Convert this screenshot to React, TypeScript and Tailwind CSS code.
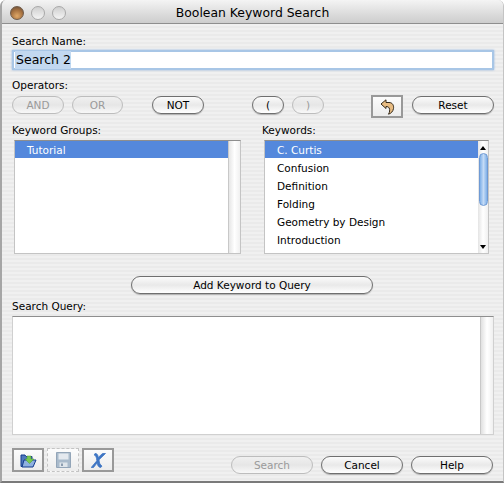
import React from 'react';

const Light = ({ active }: { active?: boolean }) => (
  <div
    className={
      active
        ? 'h-[14px] w-[14px] rounded-full border border-[#6e5a48] bg-[radial-gradient(circle_at_50%_75%,#e0a868,#a5703f_55%,#5f4a3c)]'
        : 'h-[14px] w-[14px] rounded-full border border-[#a8a8a8] bg-[linear-gradient(#cfcfcf,#f4f4f4)]'
    }
  />
);

const AquaButton = ({
  label,
  className,
  disabled,
}: {
  label: string;
  className: string;
  disabled?: boolean;
}) => (
  <div
    className={`flex h-[18px] shrink-0 items-center justify-center rounded-full border pt-[1px] text-[10.5px] ${
      disabled
        ? 'border-[#bdbdbd] bg-[linear-gradient(#f0f0f0,#e6e6e6_50%,#f8f8f8)] text-[#9a9a9a]'
        : 'border-[#6f6f6f] bg-[linear-gradient(#fbfbfb,#e9e9e9_50%,#ffffff)] text-black shadow-[0_1px_1px_rgba(0,0,0,0.25)]'
    } ${className}`}
  >
    {label}
  </div>
);

const IconBox = ({
  children,
  className,
  disabled,
}: {
  children: React.ReactNode;
  className?: string;
  disabled?: boolean;
}) => (
  <div
    className={`flex items-center justify-center bg-[linear-gradient(#fcfcfc,#ececec)] ${
      disabled ? 'border border-dashed border-[#c4c4c4]' : 'border-2 border-[#999999]'
    } ${className ?? ''}`}
  >
    {children}
  </div>
);

const Field = ({ label }: { label: string }) => (
  <div className="h-[14px] text-[10.5px] leading-[14px] text-black">{label}</div>
);

const keywords = ['Confusion', 'Definition', 'Folding', 'Geometry by Design', 'Introduction'];

export default function App() {
  return (
    <div
      className="flex h-[483px] w-[504px] flex-col overflow-hidden rounded-t-[6px] border-b-2 border-l-2 border-r border-b-[#7a7a7a] border-l-[#a6a6a6] border-r-[#c4c4c4] bg-[repeating-linear-gradient(#f0f0f0_0px,#f0f0f0_2px,#eaeaea_2px,#eaeaea_4px)] text-black"
      style={{ fontFamily: '"DejaVu Sans", sans-serif' }}
    >
      {/* Title bar */}
      <div className="relative flex h-[24px] shrink-0 items-center justify-center border-b border-[#8e8e8e] bg-[linear-gradient(#f4f4f4,#dcdcdc_60%,#cdcdcd)] pt-[3px] text-[12.4px]">
        <div className="absolute left-[8px] top-[6px] flex gap-[7px]">
          <Light active />
          <Light />
          <Light />
        </div>
        Boolean Keyword Search
      </div>

      <div className="flex flex-1 flex-col pl-[10px] pr-[9px] pt-[10px]">
        <Field label="Search Name:" />
        <div className="mt-[2px] flex h-[20px] items-center border-2 border-[#a8c6e6] bg-white pl-[1px] text-[12.500px] shadow-[0_0_2px_#8fb2dd]">
          <span className="bg-[#c2d8f0] pl-[1px]">Search 2</span>
        </div>

        <div className="mt-[8px]">
          <Field label="Operators:" />
        </div>
        <div className="mt-[3px] flex h-[23px] items-start">
          <AquaButton label="AND" disabled className="mt-[1px] w-[52px]" />
          <AquaButton label="OR" disabled className="ml-[8px] mt-[1px] w-[51px]" />
          <AquaButton label="NOT" className="ml-[29px] mt-[1px] w-[52px]" />
          <AquaButton label="(" className="ml-[48px] mt-[1px] w-[32px]" />
          <AquaButton label=")" disabled className="ml-[8px] mt-[1px] w-[32px]" />
          <IconBox className="ml-[47px] h-[23px] w-[32px]">
            <svg width="15" height="16" viewBox="0 0 15 16">
              <path
                d="M1 5 L6 .8 V3.500 H9 C12.500 3.500 14 6.500 13.500 9.500 C13 12.500 11 14.500 8.500 15.200 C9.800 13 10 11 9.200 9 C8.700 8 7.500 7.500 6 7.500 V9.500 Z"
                fill="#e8bc82"
                stroke="#33281a"
                strokeWidth="1"
                strokeLinejoin="round"
              />
            </svg>
          </IconBox>
          <AquaButton label="Reset" className="ml-[9px] mt-[1px] w-[82px]" />
        </div>

        {/* Keyword lists */}
        <div className="mt-[5px] flex">
          <div className="w-[228px]">
            <Field label="Keyword Groups:" />
            <div className="ml-[2px] mt-[3px] flex h-[114px] w-[227px] border border-[#c4c4c4] border-t-[#8e8e8e] bg-white">
              <div className="flex-1">
                <div className="flex h-[17px] items-center bg-[#5488dc] pl-[12px] pt-[2px] text-[10.5px] text-white">Tutorial</div>
              </div>
              <div className="w-[12px] border-l border-[#c8c8c8] bg-[linear-gradient(90deg,#e6e6e6,#ffffff_50%,#f0f0f0)]" />
            </div>
          </div>
          <div className="ml-[22px] w-[228px]">
            <Field label="Keywords:" />
            <div className="ml-[2px] mt-[3px] flex h-[114px] w-[225px] border border-[#c4c4c4] border-t-[#8e8e8e] bg-white">
              <div className="flex-1">
                <div className="flex h-[17px] items-center bg-[#5488dc] pl-[12px] pt-[2px] text-[10.5px] text-white">C. Curtis</div>
                <div className="pt-[2px]">
                  {keywords.map((k) => (
                    <div key={k} className="flex h-[18px] items-center pl-[12px] text-[10.5px]">
                      {k}
                    </div>
                  ))}
                </div>
              </div>
              <div className="flex w-[10px] flex-col items-center bg-[linear-gradient(90deg,#e4e4e4,#ffffff_50%,#f0f0f0)]">
                <div className="mt-[5px] h-0 w-0 border-x-[3px] border-b-[4px] border-x-transparent border-b-black" />
                <div className="mt-[3px] h-[53px] w-[9px] rounded-full border border-[#6f9ad4] bg-[linear-gradient(90deg,#7fb0e8,#c4dbf6_50%,#7fb0e8)]" />
                <div className="mb-[4px] mt-auto h-0 w-0 border-x-[3px] border-t-[4px] border-x-transparent border-t-black" />
              </div>
            </div>
          </div>
        </div>

        <div className="mt-[22px] flex justify-center pr-[2px]">
          <AquaButton label="Add Keyword to Query" className="w-[242px]" />
        </div>

        <div className="mt-[5px]">
          <Field label="Search Query:" />
        </div>
        <div className="mt-[3px] flex h-[119px] border border-[#d0d0d0] border-t-[#8e8e8e] bg-white">
          <div className="flex-1" />
          <div className="w-[13px] border-l border-[#c8c8c8] bg-[linear-gradient(90deg,#e0e0e0,#ffffff_50%,#f0f0f0)]" />
        </div>

        {/* Bottom row */}
        <div className="mt-[13px] flex items-start">
          <IconBox className="h-[24px] w-[32px]">
            <svg width="17" height="15" viewBox="0 0 17 15">
              <path d="M1 2 H5 L6 3.500 H12 V13.500 H1 Z" fill="#4f78bc" stroke="#123a8c" />
              <path d="M2 14 L4 7 H16 L13 14 Z" fill="#8fb0e0" stroke="#123a8c" />
              <path d="M7 3 H11 V6 H14 L9.500 10.500 L5 6 H7 Z" fill="#78c850" stroke="#4a9a34" strokeWidth="0.500" />
            </svg>
          </IconBox>
          <IconBox disabled className="ml-[3px] h-[24px] w-[32px]">
            <svg width="15" height="16" viewBox="0 0 15 16">
              <path d="M.5 .5 H14.500 V15.500 H.5 Z" fill="#a9bacb" stroke="#93a5b8" />
              <path d="M2.500 1.500 H12.500 V7.500 H2.500 Z" fill="#e4e9ef" />
              <path d="M3.500 10.500 H11.500 V15 H3.500 Z" fill="#dfe5eb" />
              <path d="M5 11.500 H7 V14 H5 Z" fill="#8c9db0" />
            </svg>
          </IconBox>
          <IconBox className="ml-[3px] h-[24px] w-[32px]">
            <svg width="15" height="15" viewBox="0 0 15 15">
              <path
                d="M4 .5 C6 .5 7 1.500 7.200 4.500 L11.500 .5 H14.500 L8 6.800 C8.300 10 9 12 11 13 L9.800 14.500 C7.500 14.500 6.500 12.500 6.200 9.800 L2.500 14.500 H.2 L5.800 7.800 C5.500 4.500 5 2.500 3.200 2 Z"
                fill="#3f76c4"
                stroke="#3f76c4"
                strokeWidth="0.800"
              />
            </svg>
          </IconBox>
          <AquaButton label="Search" disabled className="ml-[117px] mt-[8px] w-[82px]" />
          <AquaButton label="Cancel" className="ml-[8px] mt-[8px] w-[82px]" />
          <AquaButton label="Help" className="ml-[8px] mt-[8px] w-[82px]" />
        </div>
      </div>
    </div>
  );
}
